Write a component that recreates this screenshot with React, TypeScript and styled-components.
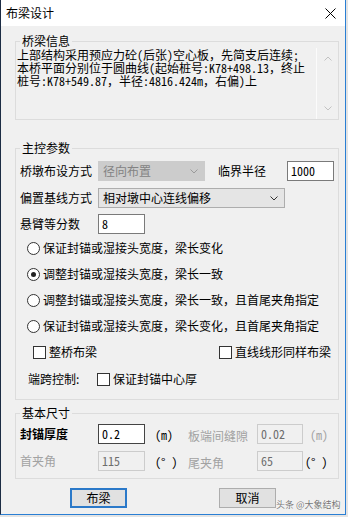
import React from 'react';
import styled, { createGlobalStyle } from 'styled-components';

const CJK = `"Noto Sans CJK SC", "Noto Sans", sans-serif`;
const MONO = `"Noto Sans Mono CJK SC", "Liberation Mono", "Noto Sans CJK SC", monospace`;

const GlobalStyle = createGlobalStyle`
  html, body { margin: 0; padding: 0; background: #e4e4e4; }
  body { font-family: ${CJK}; font-size: 12px; color: #000; }
  #root { width: 348px; height: 517px; }
`;

const Window = styled.div`
  position: relative;
  width: 346px;
  height: 515px;
  box-sizing: border-box;
  border-left: 1px solid #1c2c44;
  border-right: 1px solid #2a7fd4;
  border-bottom: 1px solid #2a7fd4;
  background: #f0f0f0;
  display: flex;
  flex-direction: column;
`;

const TitleBar = styled.div`
  height: 26px;
  flex-shrink: 0;
  background: #ffffff;
  display: flex;
  align-items: center;
  justify-content: space-between;
  padding: 0 9px 0 5px;
  font-size: 12px;
  line-height: 14px;
`;

const Body = styled.div`
  flex: 1;
  display: flex;
  flex-direction: column;
  padding: 8px 6px 0 14px;
`;

const Group = styled.fieldset<{ $mt: number }>`
  margin: ${(p) => p.$mt}px 0 0 0;
  padding: 0;
  border: 1px solid #dcdcdc;
  min-width: 0;
`;

const Legend = styled.legend`
  margin-left: 4px;
  padding: 0 2px;
  font-size: 12px;
  line-height: 14px;
`;

const InfoArea = styled.div`
  display: flex;
  height: 71px;
`;

const InfoText = styled.div`
  flex: 1;
  padding-left: 1px;
  font-family: ${MONO};
  font-size: 12px;
  line-height: 13px;
  white-space: pre;
`;

const InfoLine = styled.div`
  height: 13px;
`;

const ScrollCol = styled.div`
  width: 21px;
  border-left: 1px solid #fbfbfb;
  display: flex;
  flex-direction: column;
  justify-content: space-between;
  align-items: center;
  padding: 8px 0 8px;
`;

const Rows = styled.div<{ $pb: number; $pl?: number }>`
  display: flex;
  flex-direction: column;
  padding: 0 0 ${(p) => p.$pb}px ${(p) => p.$pl ?? 4}px;
`;

const Row = styled.div<{ $mt?: number; $h?: number; $pl?: number }>`
  display: flex;
  align-items: center;
  height: ${(p) => p.$h ?? 20}px;
  margin-top: ${(p) => p.$mt ?? 0}px;
  padding-left: ${(p) => p.$pl ?? 0}px;
  flex-shrink: 0;
`;

const Label = styled.span<{ $w?: number; $ml?: number; $grey?: boolean; $bold?: boolean; $dy?: number }>`
  width: ${(p) => p.$w ?? 78}px;
  margin-left: ${(p) => p.$ml ?? 0}px;
  flex-shrink: 0;
  color: ${(p) => (p.$grey ? '#a2a2a2' : '#000')};
  font-weight: ${(p) => (p.$bold ? 700 : 400)};
  line-height: 14px;
  position: relative;
  top: ${(p) => p.$dy ?? 0}px;
  white-space: nowrap;
`;

const Unit = styled.span<{ $w?: number; $ml?: number; $grey?: boolean }>`
  width: ${(p) => p.$w ?? 33}px;
  margin-left: ${(p) => p.$ml ?? 10}px;
  flex-shrink: 0;
  font-family: ${MONO};
  font-size: 12px;
  color: ${(p) => (p.$grey ? '#a2a2a2' : '#000')};
  white-space: pre;
`;

const Combo = styled.div<{ $w: number; $disabled?: boolean }>`
  width: ${(p) => p.$w}px;
  height: 20px;
  box-sizing: border-box;
  flex-shrink: 0;
  border: 1px solid ${(p) => (p.$disabled ? '#cccccc' : '#adadad')};
  background: ${(p) => (p.$disabled ? '#cccccc' : '#e5e5e5')};
  color: ${(p) => (p.$disabled ? '#838383' : '#000')};
  display: flex;
  align-items: center;
  justify-content: space-between;
  padding: 0 6px 0 4px;
  line-height: 14px;
`;

const Input = styled.div<{ $w?: number; $disabled?: boolean; $dark?: boolean }>`
  width: ${(p) => p.$w ?? 47}px;
  height: 20px;
  box-sizing: border-box;
  flex-shrink: 0;
  border: 1px solid ${(p) => (p.$disabled ? '#cccccc' : p.$dark ? '#444444' : '#7a7a7a')};
  background: ${(p) => (p.$disabled ? '#f0f0f0' : '#ffffff')};
  color: ${(p) => (p.$disabled ? '#6d6d6d' : '#000')};
  font-family: ${MONO};
  font-size: 12px;
  line-height: 18px;
  padding-left: 3px;
`;

const Option = styled.div<{ $pl?: number }>`
  display: flex;
  align-items: center;
  height: 26px;
  padding-left: ${(p) => p.$pl ?? 7}px;
  gap: 3px;
  flex-shrink: 0;
  white-space: nowrap;
  line-height: 14px;
`;

const RadioCircle = styled.span<{ $checked?: boolean }>`
  width: 13px;
  height: 13px;
  box-sizing: border-box;
  border: 1px solid #333333;
  border-radius: 50%;
  background: #ffffff;
  display: flex;
  align-items: center;
  justify-content: center;
  flex-shrink: 0;
  &::after {
    content: '';
    display: ${(p) => (p.$checked ? 'block' : 'none')};
    width: 5px;
    height: 5px;
    border-radius: 50%;
    background: #222222;
  }
`;

const CheckBox = styled.span`
  width: 13px;
  height: 13px;
  box-sizing: border-box;
  border: 1px solid #333333;
  background: #ffffff;
  flex-shrink: 0;
`;

const CheckItem = styled.div<{ $w?: number }>`
  display: flex;
  align-items: center;
  gap: 3px;
  width: ${(p) => (p.$w ? `${p.$w}px` : 'auto')};
  flex-shrink: 0;
  white-space: nowrap;
  line-height: 14px;
`;

const ButtonRow = styled.div`
  display: flex;
  margin-top: 9px;
  padding-left: 55px;
  gap: 92px;
`;

const Button = styled.div<{ $default?: boolean }>`
  width: 57px;
  height: 20px;
  box-sizing: border-box;
  border: ${(p) => (p.$default ? '2px solid #2b79c9' : '1px solid #adadad')};
  background: #e1e1e1;
  display: flex;
  align-items: center;
  justify-content: center;
  line-height: 14px;
`;

const Watermark = styled.div`
  position: absolute;
  left: 275px;
  top: 499px;
  font-size: 9px;
  line-height: 11px;
  color: rgba(70, 70, 70, 0.75);
  text-shadow: 0 0 1px #ffffff;
  white-space: nowrap;
`;

const Chevron = ({ up = false, color = '#333' }: { up?: boolean; color?: string }) => (
  <svg width="8" height="5" viewBox="0 0 8 5">
    <polyline
      points={up ? '0.5,4.5 4,1 7.5,4.5' : '0.5,0.5 4,4 7.5,0.5'}
      fill="none"
      stroke={color}
      strokeWidth="1"
    />
  </svg>
);

const CloseIcon = () => (
  <svg width="11" height="11" viewBox="0 0 11 11">
    <path d="M0.5 0.5 L10.5 10.5 M10.5 0.5 L0.5 10.5" stroke="#000" strokeWidth="1" fill="none" />
  </svg>
);

const infoLines = [
  '上部结构采用预应力砼(后张)空心板，先简支后连续;',
  '本桥平面分别位于圆曲线(起始桩号:K78+498.13，终止',
  '桩号:K78+549.87，半径:4816.424m，右偏)上',
];

const radios = [
  { text: '保证封锚或湿接头宽度，梁长变化', checked: false },
  { text: '调整封锚或湿接头宽度，梁长一致', checked: true },
  { text: '调整封锚或湿接头宽度，梁长一致，且首尾夹角指定', checked: false },
  { text: '保证封锚或湿接头宽度，梁长变化，且首尾夹角指定', checked: false },
];

export default function App() {
  return (
    <>
      <GlobalStyle />
      <Window>
        <TitleBar>
          <span>布梁设计</span>
          <CloseIcon />
        </TitleBar>
        <Body>
          <Group $mt={0}>
            <Legend>桥梁信息</Legend>
            <InfoArea>
              <InfoText>
                {infoLines.map((l) => (
                  <InfoLine key={l}>{l}</InfoLine>
                ))}
              </InfoText>
              <ScrollCol>
                <Chevron up color="#c2c2c2" />
                <Chevron color="#c2c2c2" />
              </ScrollCol>
            </InfoArea>
          </Group>

          <Group $mt={21}>
            <Legend>主控参数</Legend>
            <Rows $pb={6}>
              <Row $mt={6}>
                <Label>桥墩布设方式</Label>
                <Combo $w={107} $disabled>
                  <span>径向布置</span>
                  <Chevron color="#9a9a9a" />
                </Combo>
                <Label $w={69} $ml={13}>临界半径</Label>
                <Input>1000</Input>
              </Row>
              <Row $mt={7}>
                <Label>偏置基线方式</Label>
                <Combo $w={187}>
                  <span>相对墩中心连线偏移</span>
                  <Chevron />
                </Combo>
              </Row>
              <Row $mt={6}>
                <Label>悬臂等分数</Label>
                <Input>8</Input>
              </Row>
              <Row $mt={1} $h={104}>
                <Rows $pb={0} $pl={0}>
                  {radios.map((r) => (
                    <Option key={r.text}>
                      <RadioCircle $checked={r.checked} />
                      <span>{r.text}</span>
                    </Option>
                  ))}
                </Rows>
              </Row>
              <Option $pl={13}>
                <CheckItem $w={183}>
                  <CheckBox />
                  <span>整桥布梁</span>
                </CheckItem>
                <CheckItem>
                  <CheckBox />
                  <span>直线线形同样布梁</span>
                </CheckItem>
              </Option>
              <Row $h={28} $pl={8}>
                <Label $w={69}>端跨控制:</Label>
                <CheckItem>
                  <CheckBox />
                  <span>保证封锚中心厚</span>
                </CheckItem>
              </Row>
            </Rows>
          </Group>

          <Group $mt={6}>
            <Legend>基本尺寸</Legend>
            <Rows $pb={7}>
              <Row $mt={4}>
                <Label $bold>封锚厚度</Label>
                <Input $dark>0.2</Input>
                <Unit>(m)</Unit>
                <Label $w={69} $grey $dy={2}>板端间缝隙</Label>
                <Input $w={46} $disabled>0.02</Input>
                <Unit $ml={7} $grey>(m)</Unit>
              </Row>
              <Row $mt={7}>
                <Label $grey>首夹角</Label>
                <Input $disabled>115</Input>
                <Unit>{'(° )'}</Unit>
                <Label $w={69} $grey $dy={2}>尾夹角</Label>
                <Input $w={46} $disabled>65</Input>
                <Unit $ml={2} $w={30}>{'(° )'}</Unit>
              </Row>
            </Rows>
          </Group>

          <ButtonRow>
            <Button $default>布梁</Button>
            <Button>取消</Button>
          </ButtonRow>
        </Body>
        <Watermark>头条 @大象结构</Watermark>
      </Window>
    </>
  );
}
